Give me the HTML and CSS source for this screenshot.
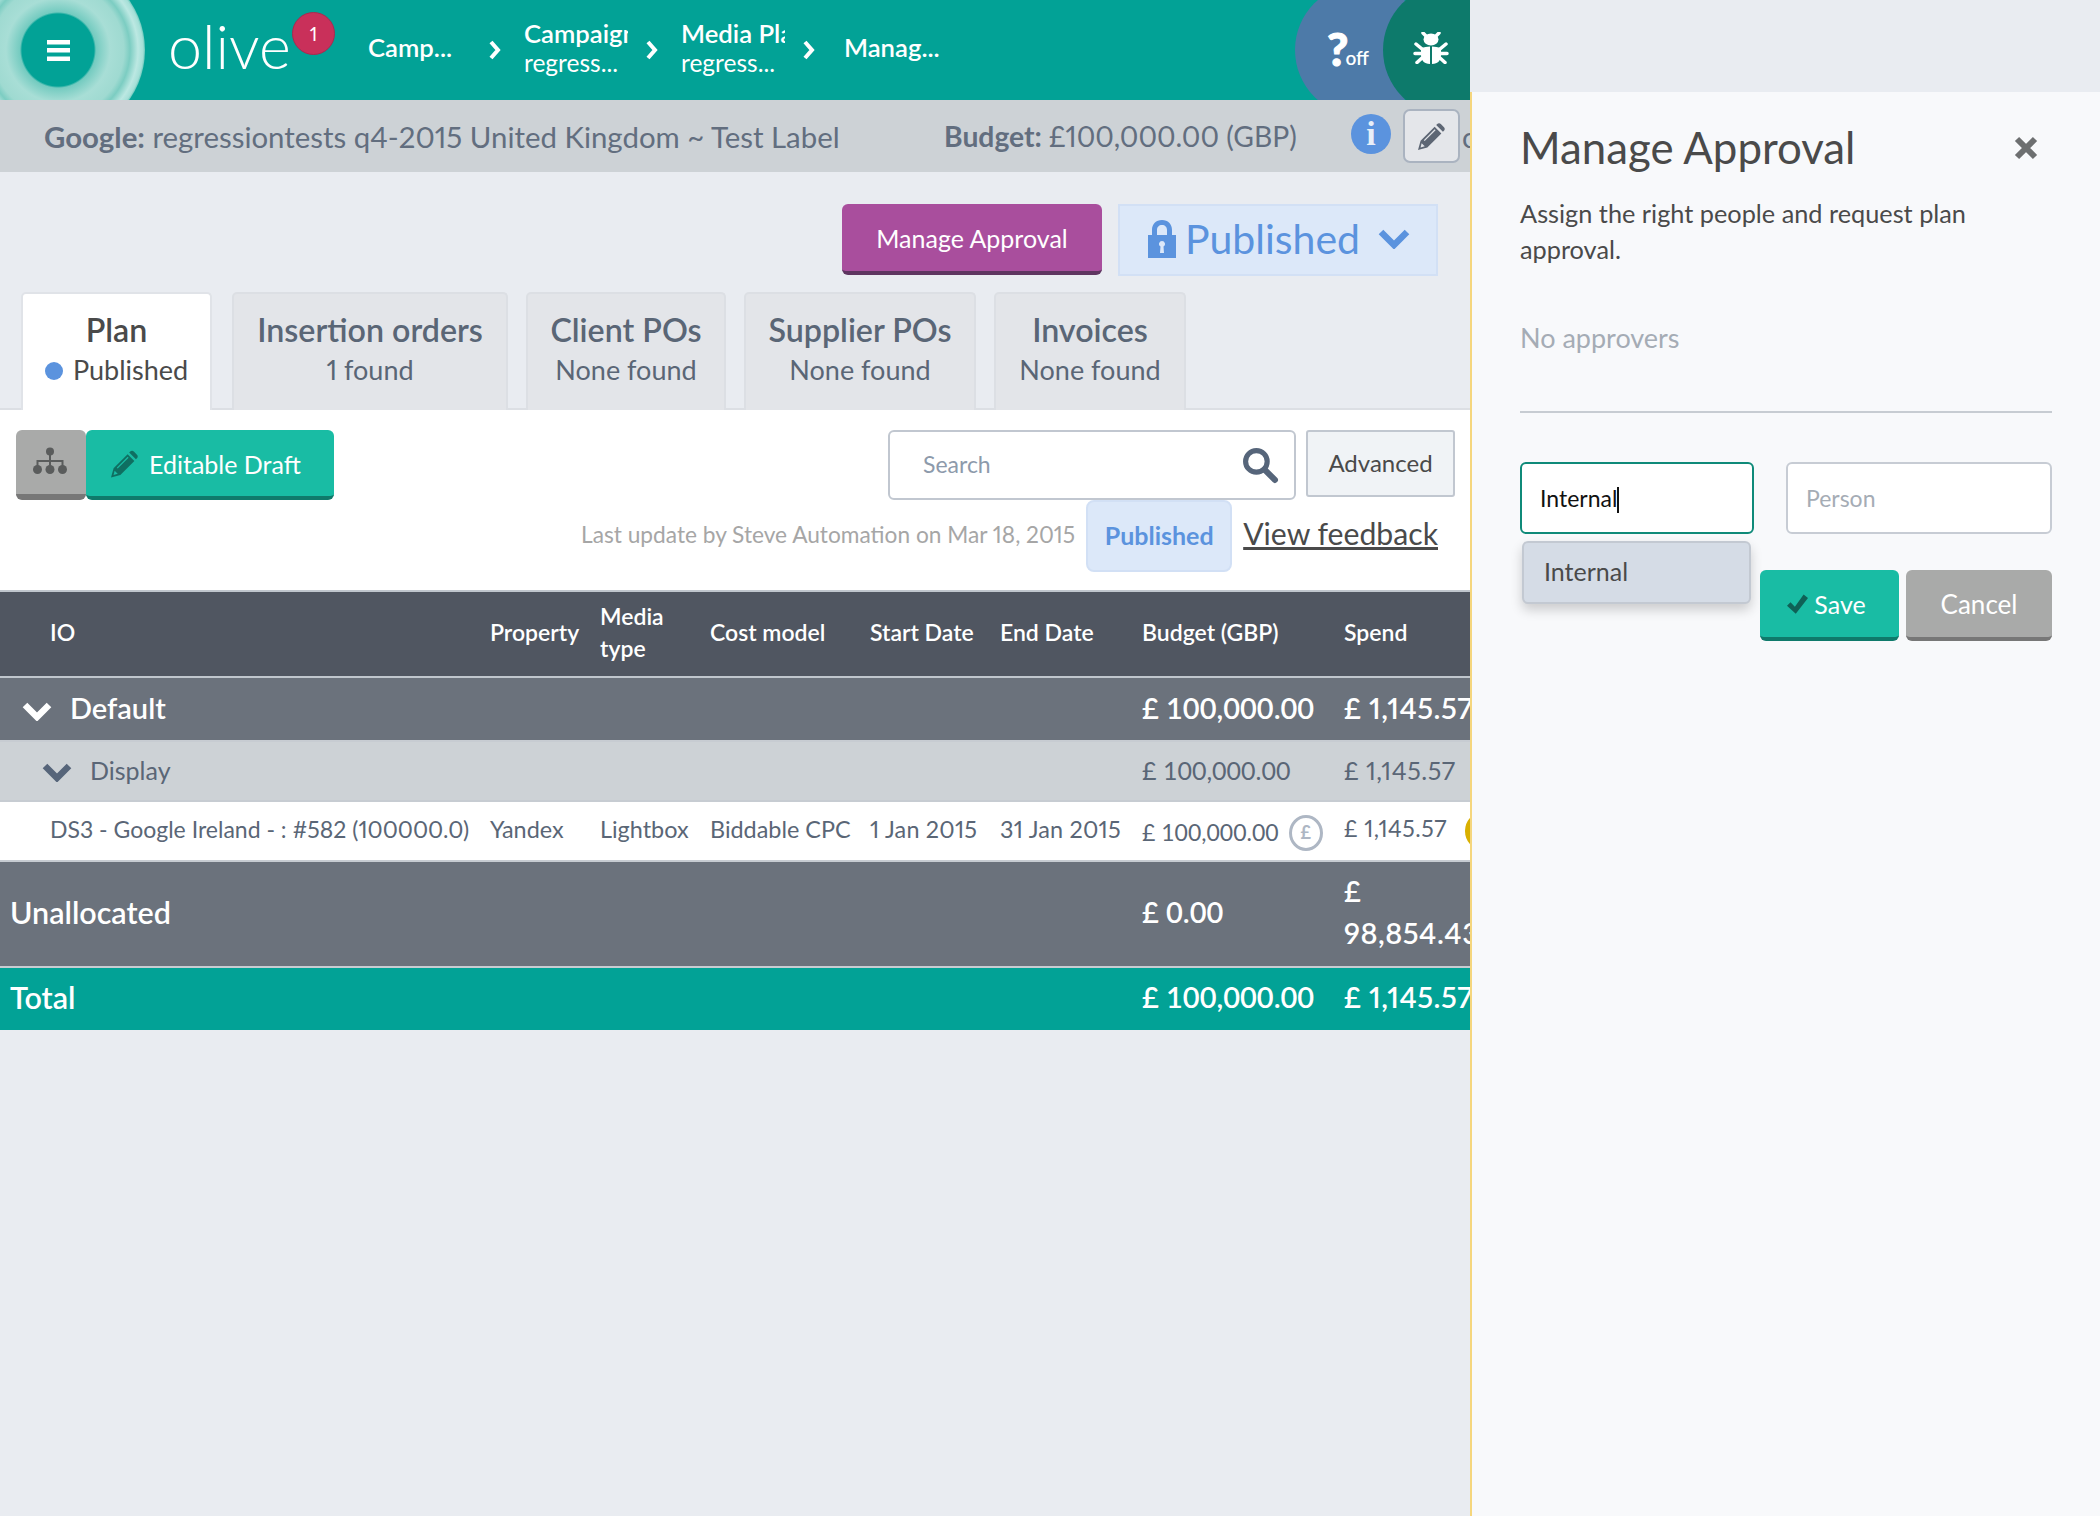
FILE: index.html
```html
<!DOCTYPE html>
<html>
<head>
  <meta charset="UTF-8">
  <title>Manage Approval | olive</title>
  <link rel="stylesheet" href="styles.css">
</head>

<body>
  <div class="main">
    <!-- top bar -->
    <header class="topbar">
      <div class="logo-rings">
        <div class="menu-btn">
          <svg width="23" height="21" viewBox="0 0 23 21"><path fill="#fff" d="M0 0h23v4.500H0zM0 8h23v4.500H0zM0 16.500h23V21H0z"/></svg>
        </div>
      </div>
      <div class="brand">olive<span class="badge">1</span></div>
      <nav class="crumbs">
        <a class="crumb crumb-first"><b>Camp...</b></a>
        <svg class="chev" width="13" height="20" viewBox="0 0 13 20"><path d="M3 2l7 8-7 8" fill="none" stroke="#fff" stroke-width="4"/></svg>
        <a class="crumb crumb-two"><b>Campaign</b><span>regress...</span></a>
        <svg class="chev" width="13" height="20" viewBox="0 0 13 20"><path d="M3 2l7 8-7 8" fill="none" stroke="#fff" stroke-width="4"/></svg>
        <a class="crumb crumb-two"><b>Media Plan</b><span>regress...</span></a>
        <svg class="chev" width="13" height="20" viewBox="0 0 13 20"><path d="M3 2l7 8-7 8" fill="none" stroke="#fff" stroke-width="4"/></svg>
        <a class="crumb crumb-last"><b>Manag...</b></a>
      </nav>
      <div class="round round-help"><span class="help-mark">?</span><span class="help-off">off</span></div>
      <div class="round round-bug">
        <svg width="36" height="32" viewBox="0 0 36 32">
          <g fill="#fff">
            <ellipse cx="18" cy="7.500" rx="7.500" ry="6"/>
            <path d="M17 14.500V32c-6 0-9-4-9-9v-7c3-1 6-1.500 9-1.500zM19 14.500V32c6 0 9-4 9-9v-7c-3-1-6-1.500-9-1.500z"/>
          </g>
          <path d="M13 4L10 1M23 4l3-3M9 17l-6-5M8 21.500H2M9 26l-5 4.500M27 17l6-5M28 21.500h6M27 26l5 4.500" fill="none" stroke="#fff" stroke-width="3.500" stroke-linecap="round"/>
        </svg>
      </div>
    </header>

    <div class="subbar">
      <span class="plan-name"><b>Google:</b> regressiontests q4-2015 United Kingdom ~ Test Label</span>
      <span class="plan-budget"><b>Budget:</b> £100,000.00 (GBP)</span>
      <span class="info-dot">i</span>
      <span class="edit-box">
        <svg width="27" height="27" viewBox="0 0 26 26"><path fill="#5d6674" d="M0 26l2.500-9L16 3.500 22.500 10 9 23.500zM17.500 2l1-1c1-1 2.500-1 3.500 0l3 3c1 1 1 2.500 0 3.500l-1 1z"/><path fill="#e4e6ea" d="M2.500 23.500l1-4 3 3z"/><path d="M6 17L16.500 6.500" stroke="#e4e6ea" stroke-width="1.200"/></svg>
      </span>
      <span class="cut-letter">c</span>
    </div>

    <div class="actions">
      <button class="btn-purple">Manage Approval</button>
      <div class="status-box">
        <svg width="28" height="38" viewBox="0 0 28 38"><path fill="#5b93de" fill-rule="evenodd" d="M14 0c6 0 10 4 10 10v5h4v23H0V15h4v-5C4 4 8 0 14 0zm0 5c-3 0-5 2-5 5v5h10v-5c0-3-2-5-5-5zm0 16a3 3 0 0 0-1.500 5.600L12 33h4l-.5-6.400A3 3 0 0 0 14 21z"/></svg>
        <span>Published</span>
        <svg class="status-chev" width="32" height="20" viewBox="0 0 32 20"><path d="M3 3l13 13L29 3" fill="none" stroke="#5b93de" stroke-width="6.500"/></svg>
      </div>
    </div>

    <div class="tabs">
      <div class="tab tab-active tab-plan"><b>Plan</b><span><i class="dot"></i>Published</span></div>
      <div class="tab tab-io"><b>Insertion orders</b><span>1 found</span></div>
      <div class="tab tab-client"><b>Client POs</b><span>None found</span></div>
      <div class="tab tab-supplier"><b>Supplier POs</b><span>None found</span></div>
      <div class="tab tab-invoice"><b>Invoices</b><span>None found</span></div>
    </div>

    <section class="content">
      <div class="tools">
        <div class="tools-left">
          <button class="btn-tree">
            <svg width="34" height="28" viewBox="0 0 34 28"><g fill="#5a5c5c"><circle cx="17" cy="4.500" r="4"/><circle cx="4.500" cy="22.500" r="4.500"/><circle cx="17" cy="22.500" r="4.500"/><circle cx="29.500" cy="22.500" r="4.500"/></g><path d="M17 8v11M4.500 19v-5h25v5" fill="none" stroke="#5a5c5c" stroke-width="2"/></svg>
          </button>
          <button class="btn-draft">
            <svg width="27" height="28" viewBox="0 0 26 26"><path fill="#0f6f61" d="M0 26l2.500-9L16 3.500 22.500 10 9 23.500zM17.500 2l1-1c1-1 2.500-1 3.500 0l3 3c1 1 1 2.500 0 3.500l-1 1z"/><path fill="#19bca4" d="M2.500 23.500l1-4 3 3z"/><path d="M6 17L16.500 6.500" stroke="#19bca4" stroke-width="1.200"/></svg>
            Editable Draft
          </button>
        </div>
        <div class="tools-right">
          <div class="search">
            <span>Search</span>
            <svg width="37" height="37" viewBox="0 0 36 36"><circle cx="14" cy="14" r="10.500" fill="none" stroke="#56657a" stroke-width="5"/><path d="M22 22l10 10" stroke="#56657a" stroke-width="6" stroke-linecap="round"/></svg>
          </div>
          <button class="btn-advanced">Advanced</button>
        </div>
      </div>
      <div class="meta">
        <span class="last-update">Last update by Steve Automation on Mar 18, 2015</span>
        <span class="chip">Published</span>
        <a class="feedback">View feedback</a>
      </div>

      <table class="plan-table">
        <colgroup>
          <col class="c-io"><col class="c-prop"><col class="c-media"><col class="c-cost"><col class="c-start"><col class="c-end"><col class="c-budget"><col class="c-spend">
        </colgroup>
        <thead>
          <tr>
            <th class="first">IO</th><th>Property</th><th>Media type</th><th>Cost model</th><th>Start Date</th><th>End Date</th><th>Budget (GBP)</th><th>Spend</th>
          </tr>
        </thead>
        <tbody>
          <tr class="row-group">
            <td colspan="6">
              <svg width="30" height="20" viewBox="0 0 30 20"><path d="M3 4l12 12L27 4" fill="none" stroke="#fff" stroke-width="6.500"/></svg>Default
            </td>
            <td class="budget">£ 100,000.00</td><td class="spend">£ 1,145.57</td>
          </tr>
          <tr class="row-sub">
            <td colspan="6">
              <svg width="30" height="20" viewBox="0 0 30 20"><path d="M3 4l12 12L27 4" fill="none" stroke="#56657a" stroke-width="6.500"/></svg>Display
            </td>
            <td class="budget">£ 100,000.00</td><td class="spend">£ 1,145.57</td>
          </tr>
          <tr class="row-item">
            <td class="first io-name">DS3 - Google Ireland - : #582 (100000.0)</td><td>Yandex</td><td>Lightbox</td><td>Biddable CPC</td><td class="date">1 Jan 2015</td><td class="date">31 Jan 2015</td>
            <td class="budget item-budget">£ 100,000.00<span class="pound">£</span></td>
            <td class="spend item-spend">£ 1,145.57<span class="coin"></span></td>
          </tr>
          <tr class="row-unalloc">
            <td colspan="6" class="label">Unallocated</td>
            <td class="budget">£ 0.00</td><td class="spend">£<br>98,854.43</td>
          </tr>
          <tr class="row-total">
            <td colspan="6" class="label">Total</td>
            <td class="budget">£ 100,000.00</td><td class="spend">£ 1,145.57</td>
          </tr>
        </tbody>
      </table>
    </section>
  </div>

  <!-- approval side panel -->
  <aside class="panel">
    <div class="panel-strip"></div>
    <div class="panel-body">
      <div class="panel-head">
        <h2>Manage Approval</h2>
        <svg width="24" height="24" viewBox="0 0 24 24"><path d="M3 3l18 18M21 3L3 21" stroke="#6d6f70" stroke-width="6"/></svg>
      </div>
      <p class="panel-desc">Assign the right people and request plan approval.</p>
      <p class="no-approvers">No approvers</p>
      <div class="approver-form">
        <div class="col-type">
          <div class="field field-focus">Internal<i class="caret"></i></div>
          <div class="suggest">Internal</div>
        </div>
        <div class="col-person">
          <div class="field field-empty">Person</div>
          <div class="form-btns">
            <button class="btn-save">
              <svg width="21" height="20" viewBox="0 0 24 22"><path fill="#0f6156" d="M0 13l4-4 5 5L19 0l5 4L10 22z"/></svg>
              Save
            </button>
            <button class="btn-cancel">Cancel</button>
          </div>
        </div>
      </div>
    </div>
  </aside>
</body>

</html>
```

FILE: styles.css
```css
* {
  box-sizing: border-box;
}
html, body {
  margin: 0;
  height: 1516px;
}
body {
  display: flex;
  width: 2100px;
  overflow: hidden;
  background: #e9ecf1;
  font-family: Lato, "Liberation Sans", sans-serif;
  font-variant-numeric: proportional-nums;
  color: #4a4a4a;
}
button {
  font-family: inherit;
  font-variant-numeric: inherit;
  border: none;
  cursor: pointer;
}
b {
  font-weight: 700;
}

.main {
  width: 1470px;
  flex-shrink: 0;
  overflow: hidden;
}

/* top bar */
.topbar {
  display: flex;
  align-items: center;
  height: 100px;
  background: #02a296;
  overflow: hidden;
  color: #fff;
}
.logo-rings {
  flex-shrink: 0;
  width: 174px;
  height: 174px;
  margin-left: -29px;
  display: flex;
  align-items: center;
  justify-content: center;
  border-radius: 50%;
  background: radial-gradient(circle, #02a296 0 36px, #74cbc0 38px, #a8ded6 52px, #9fdad1 66px, #7ccdc2 72px, #bce8e2 80px, #a5dfd7 85px, #6cc8bc 87px);
}
.menu-btn {
  width: 23px;
  height: 21px;
  display: flex;
}
.brand {
  position: relative;
  flex-shrink: 0;
  align-self: flex-start;
  width: 122px;
  margin-left: 23px;
  font-size: 61px;
  font-weight: 300;
  line-height: 92px;
}
.badge {
  position: absolute;
  left: 124px;
  top: 12px;
  width: 43px;
  height: 43px;
  border-radius: 50%;
  background: #c9305a;
  border: 1px solid #a9294f;
  font-size: 19px;
  font-weight: 400;
  line-height: 41px;
  text-align: center;
}
.crumbs {
  display: flex;
  align-items: center;
  margin-left: 78px;
  flex-shrink: 0;
}
.crumb {
  display: flex;
  flex-direction: column;
  font-size: 24.500px;
  line-height: 30px;
  overflow: hidden;
  white-space: nowrap;
}
.crumb b {
  font-size: 25.700px;
  font-weight: 600;
}
.crumb-first {
  width: 120px;
  margin-top: -6px;
}
.crumb-two {
  width: 104px;
  margin: -4px 17px 0 23px;
}
.crumb-last {
  margin-left: 29px;
  margin-top: -6px;
}
.chev {
  flex-shrink: 0;
}
.round {
  flex-shrink: 0;
  width: 132px;
  height: 132px;
  border-radius: 50%;
  display: flex;
  align-items: center;
}
.round-help {
  margin-left: auto;
  margin-right: -1px;
  background: #4d7aa8;
  padding: 0 0 0 32px;
}
.help-mark {
  font-size: 46px;
  font-weight: 900;
  margin-top: -4px;
  -webkit-text-stroke: 1px #fff;
}
.help-off {
  font-size: 19px;
  font-weight: 600;
  margin: 15px 0 0 -3px;
}
.round-bug {
  margin-left: -43px;
  margin-right: -45px;
  background: #0d7a6b;
  padding-left: 30px;
  padding-bottom: 4px;
}

/* plan summary */
.subbar {
  display: flex;
  align-items: center;
  height: 72px;
  padding-left: 44px;
  background: #cdd2d6;
  color: #626e7f;
  white-space: nowrap;
}
.subbar span {
  flex-shrink: 0;
}
.plan-name {
  width: 900px;
  font-size: 29.400px;
}
.plan-budget {
  width: 407px;
  font-size: 28.300px;
}
.info-dot {
  width: 40px;
  height: 40px;
  margin-top: -4px;
  border-radius: 50%;
  background: #5b93de;
  color: #e9eff8;
  font-family: "Liberation Serif", serif;
  font-weight: 700;
  font-size: 34px;
  line-height: 40px;
  text-align: center;
}
.edit-box {
  display: flex;
  align-items: center;
  justify-content: center;
  width: 57px;
  height: 54px;
  margin-left: 12px;
  border: 2px solid #aab3c0;
  border-radius: 7px;
  background: #e4e6ea;
}
.cut-letter {
  margin-left: 2px;
  font-size: 29px;
}

.actions {
  display: flex;
  justify-content: flex-end;
  padding: 32px 32px 0 0;
  gap: 16px;
}
.btn-purple {
  width: 260px;
  height: 71px;
  padding-top: 2px;
  background: #a94e9d;
  border-bottom: 4px solid #5e3560;
  border-radius: 6px;
  color: #fff;
  font-size: 25px;
}
.status-box {
  display: flex;
  align-items: center;
  width: 320px;
  height: 72px;
  padding: 0 0 3px 28px;
  border: 2px solid #d2e0f5;
  background: #dce8f9;
  color: #5b93de;
  font-size: 41px;
}
.status-box span {
  margin-left: 9px;
}
.status-chev {
  margin-left: 18px;
}

/* tabs */
.tabs {
  display: flex;
  align-items: flex-end;
  height: 134px;
  padding: 16px 0 0 21px;
  border-bottom: 2px solid #dcdfe4;
}
.tab {
  display: flex;
  flex-direction: column;
  align-items: center;
  height: 118px;
  margin-bottom: -2px;
  margin-right: 18px;
  padding-top: 15px;
  border: 2px solid #dcdfe4;
  border-bottom: none;
  border-radius: 5px 5px 0 0;
  background: #e3e5e9;
  color: #5a6676;
  white-space: nowrap;
}
.tab b {
  font-size: 32.200px;
  line-height: 42px;
  font-weight: 600;
}
.tab span {
  font-size: 27px;
  line-height: 38px;
}
.tab-active {
  background: #fff;
  color: #4a4a4a;
  border-color: #e0e3e8;
}
.tab-plan {
  width: 191px;
  margin-right: 20px;
}
.tab-io {
  width: 276px;
}
.tab-client {
  width: 200px;
}
.tab-supplier {
  width: 232px;
}
.tab-invoice {
  width: 192px;
}
.dot {
  display: inline-block;
  width: 18px;
  height: 18px;
  margin-right: 10px;
  border-radius: 50%;
  background: #5b93de;
}

/* white content */
.content {
  background: #fff;
}
.tools {
  display: flex;
  justify-content: space-between;
  padding: 20px 15px 0 16px;
}
.tools-left {
  display: flex;
}
.btn-tree {
  width: 70px;
  height: 70px;
  padding: 0 3px 0 0;
  background: #a9aaa9;
  border-bottom: 6px solid #777;
  border-radius: 6px;
}
.btn-draft {
  display: flex;
  align-items: center;
  gap: 11px;
  width: 248px;
  height: 70px;
  padding: 2px 0 0 25px;
  background: #19bca4;
  border-bottom: 4px solid #0f7a6b;
  border-radius: 6px;
  color: #fff;
  font-size: 25px;
}
.tools-right {
  display: flex;
  gap: 10px;
}
.search {
  display: flex;
  align-items: center;
  justify-content: space-between;
  width: 408px;
  height: 70px;
  padding: 0 15px 0 33px;
  border: 2px solid #c1c7d0;
  border-radius: 6px;
  background: #fff;
  color: #8d9aab;
  font-size: 23px;
}
.search span {
  margin-bottom: 2px;
}
.btn-advanced {
  width: 149px;
  height: 67px;
  padding-bottom: 4px;
  border: 2px solid #c1c7d0;
  border-radius: 3px;
  background: #f0f3f6;
  color: #4a4a4a;
  font-size: 24px;
}
.meta {
  display: flex;
  align-items: center;
  justify-content: flex-end;
  height: 72px;
  margin-bottom: 18px;
  padding-right: 32px;
}
.last-update {
  margin-bottom: 3px;
  color: #a6a6a6;
  font-size: 22.700px;
}
.chip {
  width: 146px;
  height: 72px;
  margin: 0 11px 0 11px;
  border: 2px solid #d2e0f5;
  border-radius: 8px;
  background: #dce8f9;
  color: #5b93de;
  font-size: 25px;
  font-weight: 700;
  line-height: 66px;
  text-align: center;
}
.feedback {
  margin-bottom: 6px;
  color: #4a4a4a;
  font-size: 30.200px;
  text-decoration: underline;
}

/* table */
.plan-table {
  width: 1470px;
  table-layout: fixed;
  border-collapse: separate;
  border-spacing: 0;
  background: #e9ecf1;
}
.c-io { width: 490px; }
.c-prop { width: 110px; }
.c-media { width: 110px; }
.c-cost { width: 160px; }
.c-start { width: 130px; }
.c-end { width: 142px; }
.c-budget { width: 202px; }
.c-spend { width: 126px; }
.plan-table th {
  height: 88px;
  background: #505661;
  border-top: 2px solid #c0c6cd;
  border-bottom: 2px solid #c0c6cd;
  color: #fff;
  font-size: 23px;
  font-weight: 600;
  line-height: 32px;
  text-align: left;
  padding: 0 0 5px;
}
.plan-table th.first,
.plan-table td.first {
  padding-left: 50px;
}
.plan-table td {
  padding: 0;
  white-space: nowrap;
  border-bottom: 2px solid #c7ccd2;
}
.budget {
  font-variant-numeric: tabular-nums;
}
.spend {
  letter-spacing: 0.500px;
}
.row-group td {
  height: 64px;
  padding-bottom: 4px;
  background: #6b727c;
  color: #fff;
  font-size: 29px;
  font-weight: 600;
}
.row-group svg {
  margin: 0 18px 0 22px;
  vertical-align: -2px;
}
.row-sub td {
  height: 60px;
  padding-bottom: 3px;
  background: #cdd2d6;
  color: #5a6676;
  font-size: 25px;
}
.row-sub svg {
  margin: 0 18px 0 42px;
  vertical-align: -2px;
}
.row-item td {
  height: 60px;
  padding-bottom: 5px;
  background: #fff;
  color: #5a6676;
  font-size: 23.400px;
}
.row-item td.io-name {
  font-size: 23px;
}
.row-item td.date {
  letter-spacing: 0.200px;
}
.row-item td.item-budget {
  padding: 4px 0 0;
  font-size: 23px;
}
.row-item td.item-spend {
  padding-bottom: 0;
  font-size: 23px;
}
.row-unalloc td {
  height: 106px;
  padding-bottom: 5px;
  background: #6b727c;
  color: #fff;
  font-size: 29px;
  font-weight: 600;
  line-height: 42px;
}
.row-total td {
  height: 62px;
  padding-bottom: 5px;
  background: #02a296;
  border-bottom: none;
  color: #fff;
  font-size: 29px;
  font-weight: 600;
}
.plan-table td.label {
  padding-left: 10px;
  font-size: 30.500px;
}
.pound {
  display: inline-block;
  width: 34px;
  height: 36px;
  margin-left: 10px;
  border: 3px solid #aeb7c4;
  border-radius: 50%;
  color: #aeb7c4;
  font-size: 18px;
  font-weight: 700;
  line-height: 29px;
  text-align: center;
  vertical-align: 2px;
}
.coin {
  display: inline-block;
  width: 32px;
  height: 36px;
  margin-left: 18px;
  border-radius: 50%;
  background: #d9b000;
  vertical-align: middle;
}

/* side panel */
.panel {
  flex: 1;
  display: flex;
  flex-direction: column;
}
.panel-strip {
  height: 92px;
  background: #e9ecf1;
}
.panel-body {
  flex: 1;
  padding: 0 48px 0 48px;
  background: #f8f9fb;
  border-left: 2px solid #f5d67d;
}
.panel-head {
  display: flex;
  align-items: center;
  justify-content: space-between;
  height: 54px;
  margin-top: 29px;
  padding-right: 14px;
}
.panel-head h2 {
  margin: -2px 0 0;
  font-size: 43.800px;
  font-weight: 400;
  color: #4a4a4a;
}
.panel-desc {
  margin: 20px 0 0;
  width: 500px;
  font-size: 25.300px;
  line-height: 36px;
  color: #4a4a4a;
}
.no-approvers {
  margin: 53px 0 0;
  height: 93px;
  border-bottom: 2px solid #c7ccd2;
  font-size: 27px;
  line-height: 36px;
  color: #a5acb5;
}
.approver-form {
  display: flex;
  gap: 32px;
  margin-top: 49px;
}
.field {
  height: 72px;
  padding-left: 18px;
  border: 2px solid #c7ccd4;
  border-radius: 6px;
  background: #fff;
  font-size: 23px;
  line-height: 68px;
}
.field-focus {
  width: 234px;
  border-color: #0f8a79;
  color: #111;
}
.caret {
  display: inline-block;
  width: 2px;
  height: 26px;
  background: #111;
  vertical-align: -6px;
}
.field-empty {
  width: 266px;
  color: #a5acb5;
}
.suggest {
  width: 229px;
  height: 63px;
  margin: 7px 0 0 2px;
  padding-left: 20px;
  border: 2px solid #c3c9d2;
  border-radius: 6px;
  background: #d5dce6;
  box-shadow: 0 6px 12px rgba(0, 0, 0, 0.18);
  font-size: 25px;
  line-height: 56px;
}
.form-btns {
  display: flex;
  gap: 7px;
  margin: 36px 0 0 -26px;
}
.btn-save {
  display: flex;
  align-items: center;
  justify-content: center;
  gap: 6px;
  width: 139px;
  height: 71px;
  padding-right: 12px;
  background: #19bca4;
  border-bottom: 4px solid #0f7a6b;
  border-radius: 6px;
  color: #fff;
  font-size: 25px;
}
.btn-cancel {
  width: 146px;
  height: 71px;
  background: #a9aaa9;
  border-bottom: 4px solid #777;
  border-radius: 6px;
  color: #fff;
  font-size: 26px;
}
```
